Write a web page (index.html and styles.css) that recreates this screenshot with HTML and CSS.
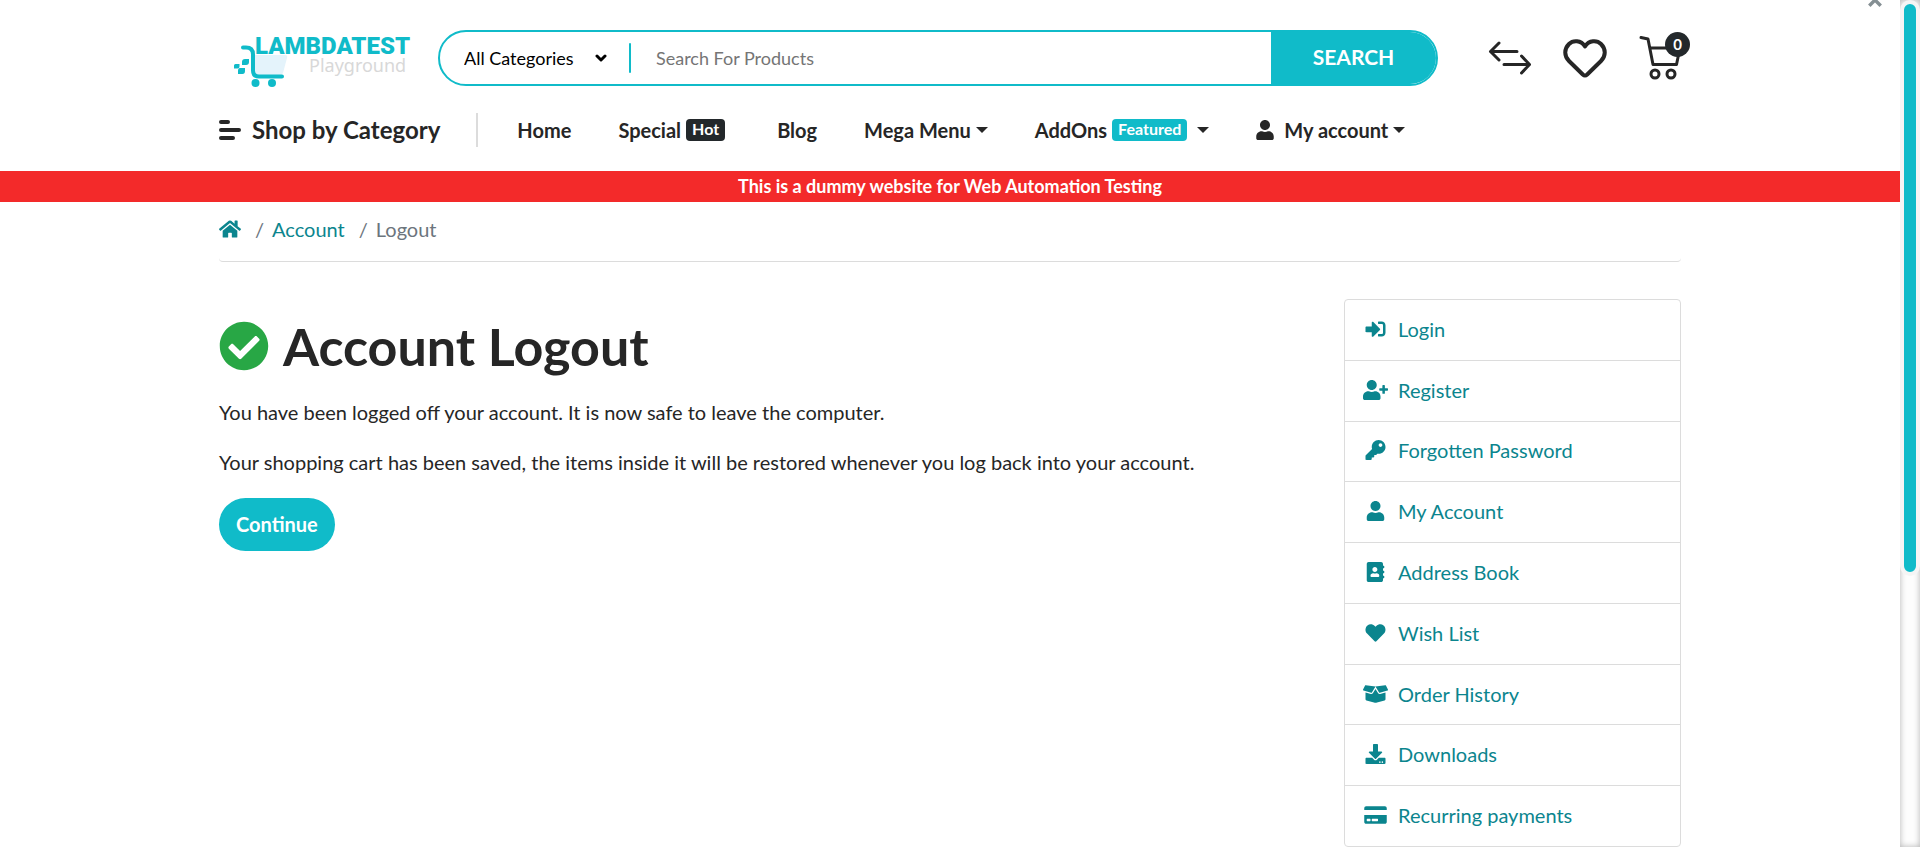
FILE: index.html
```html
<!DOCTYPE html>
<html lang="en">
<head>
<meta charset="utf-8">
<meta name="viewport" content="width=device-width, initial-scale=1">
<title>Account Logout</title>
<link rel="stylesheet" href="styles.css">
</head>
<body>
<div class="page">
  <button class="dismiss" type="button" aria-label="Close">
    <svg viewBox="0 0 14 14"><path d="M2 2l10 10M12 2L2 12"/></svg>
  </button>

  <header class="container">
    <div class="topbar">
      <a class="logo" href="#" aria-label="LambdaTest Playground">
        <svg viewBox="0 -6 180 56">
          <path class="logo-basket" d="M22 19h30q3 0 2 3l-4 15q-1 2-3 2H24q-3 0-3-3z"/>
          <path class="logo-frame" d="M10 11.500h3q7 0 7 7v16q0 6 6 6h23"/>
          <path class="logo-teal" d="M2.500 28h4v2.500q0 2-2 2H1V29.500q0-1.500 1.500-1.500zM12 23h4v3q0 3-3 3H9v-3q0-3 3-3zM7 32h5v3q0 3-2.500 3H5v-3q0-3 2-3z"/>
          <circle class="logo-teal" cx="22.500" cy="47" r="4"/>
          <circle class="logo-teal" cx="39" cy="47" r="4"/>
          <text class="logo-name" x="22" y="18">LAMBDATEST</text>
          <text class="logo-sub" x="76" y="36">Playground</text>
        </svg>
      </a>

      <form class="search">
        <label class="category">
          <span class="sr-only">Category</span>
          <select><option>All Categories</option></select>
          <svg viewBox="0 0 12 8"><path d="M2 2l4 4 4-4"/></svg>
        </label>
        <input class="query" type="text" placeholder="Search For Products" aria-label="Search For Products">
        <button class="search-button" type="submit">SEARCH</button>
      </form>

      <div class="actions">
        <a href="#" aria-label="Compare">
          <svg class="stroke-icon" width="44" height="44" viewBox="0 2 44 44"><path d="M29 17.500H2.500M11 9l-8.500 8.500L11 26M16 30.500h25.500M33.500 22l8 8.500-8 8.500"/></svg>
        </a>
        <a href="#" aria-label="Wish list">
          <svg class="stroke-icon heart" width="44" height="44" viewBox="0 2 44 44"><path d="M22 12.500C18 6 10 6 6 10C1 15 1 22 6 27L19.800 40.500Q22 42.500 24.200 40.500L38 27C43 22 43 15 38 10C34 6 26 6 22 12.500Z"/></svg>
        </a>
        <a class="cart" href="#" aria-label="Cart, 0 items">
          <svg class="stroke-icon" width="44" height="50" viewBox="0 2 44 50"><path d="M3 6.500l7 1.500L15 33.500h23.500L42 17H12"/><circle cx="17" cy="43" r="4"/><circle cx="33" cy="43" r="4"/></svg>
          <span class="cart-count">0</span>
        </a>
      </div>
    </div>

    <nav class="mainnav">
      <a class="shop" href="#">
        <svg width="22" height="20" viewBox="0 0 22 20"><path d="M2 2h7M2 10h18M2 18h12"/></svg>
        Shop by Category
      </a>
      <a href="#">Home</a>
      <a class="special" href="#">Special <span class="badge badge-dark">Hot</span></a>
      <a href="#">Blog</a>
      <a href="#">Mega Menu <span class="caret"></span></a>
      <a href="#">AddOns <span class="badge badge-teal">Featured</span> <span class="caret caret-spaced"></span></a>
      <a href="#">
        <svg class="user" width="18" height="20" viewBox="0 0 448 512"><path d="M224 256c70.700 0 128-57.300 128-128S294.700 0 224 0 96 57.300 96 128s57.300 128 128 128zm89.600 32h-16.700c-22.200 10.200-46.900 16-72.900 16s-50.600-5.800-72.900-16h-16.700C60.200 288 0 348.200 0 422.400V464c0 26.500 21.500 48 48 48h352c26.500 0 48-21.500 48-48v-41.600c0-74.200-60.200-134.400-134.400-134.400z"/></svg>
        My account <span class="caret"></span>
      </a>
    </nav>
  </header>

  <div class="notice">This is a dummy website for Web Automation Testing</div>

  <div class="container">
    <nav aria-label="Breadcrumb">
      <ol class="breadcrumb">
        <li><a href="#" aria-label="Home"><svg width="22" height="20" viewBox="0 0 576 512"><path d="M280.370 148.260L96 300.110V464a16 16 0 0 0 16 16l112.060-.29a16 16 0 0 0 15.920-16V368a16 16 0 0 1 16-16h64a16 16 0 0 1 16 16v95.640a16 16 0 0 0 16 16.050L464 480a16 16 0 0 0 16-16V300L295.670 148.260a12.190 12.190 0 0 0-15.300 0zM571.600 251.470L488 182.560V44.050a12 12 0 0 0-12-12h-56a12 12 0 0 0-12 12v72.610L318.470 43a48 48 0 0 0-61 0L4.340 251.470a12 12 0 0 0-1.600 16.900l25.500 31A12 12 0 0 0 45.150 301l235.220-193.740a12.190 12.190 0 0 1 15.300 0L530.900 301a12 12 0 0 0 16.900-1.600l25.500-31a12 12 0 0 0-1.700-16.930z"/></svg></a></li>
        <li><a href="#">Account</a></li>
        <li aria-current="page">Logout</li>
      </ol>
    </nav>

    <div class="columns">
      <main class="content">
        <h1><svg width="50" height="50" viewBox="0 0 512 512"><path d="M504 256c0 136.967-111.033 248-248 248S8 392.967 8 256 119.033 8 256 8s248 111.033 248 248zM227.314 387.314l184-184c6.248-6.248 6.248-16.379 0-22.627l-22.627-22.627c-6.248-6.249-16.379-6.249-22.628 0L216 308.118l-70.059-70.059c-6.248-6.248-16.379-6.248-22.628 0l-22.627 22.627c-6.248 6.248-6.248 16.379 0 22.627l104 104c6.249 6.249 16.379 6.249 22.628.001z"/></svg>Account Logout</h1>
        <p>You have been logged off your account. It is now safe to leave the computer.</p>
        <p>Your shopping cart has been saved, the items inside it will be restored whenever you log back into your account.</p>
        <a class="continue" href="#">Continue</a>
      </main>

      <aside class="account-menu">
        <a href="#"><svg viewBox="0 0 512 512"><path d="M416 448h-84c-6.600 0-12-5.400-12-12v-40c0-6.600 5.400-12 12-12h84c17.700 0 32-14.300 32-32V160c0-17.700-14.300-32-32-32h-84c-6.600 0-12-5.400-12-12V76c0-6.600 5.400-12 12-12h84c53 0 96 43 96 96v192c0 53-43 96-96 96zm-47-201L201 79c-15-15-41-4.500-41 17v96H24c-13.300 0-24 10.700-24 24v96c0 13.300 10.700 24 24 24h136v96c0 21.500 26 32 41 17l168-168c9.300-9.400 9.300-24.600 0-34z"/></svg>Login</a>
        <a href="#"><svg viewBox="0 0 640 512"><path d="M624 208h-64v-64c0-8.800-7.200-16-16-16h-32c-8.800 0-16 7.200-16 16v64h-64c-8.800 0-16 7.200-16 16v32c0 8.800 7.200 16 16 16h64v64c0 8.800 7.200 16 16 16h32c8.800 0 16-7.200 16-16v-64h64c8.800 0 16-7.200 16-16v-32c0-8.800-7.200-16-16-16zm-400 48c70.700 0 128-57.300 128-128S294.700 0 224 0 96 57.300 96 128s57.300 128 128 128zm89.600 32h-16.700c-22.200 10.200-46.900 16-72.900 16s-50.600-5.800-72.900-16h-16.700C60.200 288 0 348.200 0 422.400V464c0 26.500 21.500 48 48 48h352c26.500 0 48-21.500 48-48v-41.600c0-74.200-60.200-134.400-134.400-134.400z"/></svg>Register</a>
        <a href="#"><svg viewBox="0 0 512 512"><path d="M512 176.001C512 273.203 433.202 352 336 352c-11.220 0-22.190-1.062-32.827-3.069l-24.012 27.014A23.999 23.999 0 0 1 261.223 384H224v40c0 13.255-10.745 24-24 24h-40v40c0 13.255-10.745 24-24 24H24c-13.255 0-24-10.745-24-24v-78.059c0-6.365 2.529-12.470 7.029-16.971l161.802-161.802C163.108 213.814 160 195.271 160 176 160 78.798 238.797.001 335.999 0 433.488-.001 512 78.511 512 176.001zM336 128c0 26.510 21.490 48 48 48s48-21.490 48-48-21.490-48-48-48-48 21.490-48 48z"/></svg>Forgotten Password</a>
        <a href="#"><svg viewBox="0 0 448 512"><path d="M224 256c70.700 0 128-57.300 128-128S294.700 0 224 0 96 57.300 96 128s57.300 128 128 128zm89.600 32h-16.700c-22.200 10.200-46.900 16-72.900 16s-50.600-5.800-72.900-16h-16.700C60.200 288 0 348.200 0 422.400V464c0 26.500 21.500 48 48 48h352c26.500 0 48-21.500 48-48v-41.600c0-74.200-60.200-134.400-134.400-134.400z"/></svg>My Account</a>
        <a href="#"><svg viewBox="0 0 448 512"><path d="M436 160c6.600 0 12-5.400 12-12v-40c0-6.600-5.400-12-12-12h-20V48c0-26.500-21.500-48-48-48H48C21.500 0 0 21.500 0 48v416c0 26.500 21.500 48 48 48h320c26.500 0 48-21.500 48-48v-48h20c6.600 0 12-5.400 12-12v-40c0-6.600-5.400-12-12-12h-20v-64h20c6.600 0 12-5.400 12-12v-40c0-6.600-5.400-12-12-12h-20v-64h20zm-228-32c35.300 0 64 28.700 64 64s-28.700 64-64 64-64-28.700-64-64 28.700-64 64-64zm112 236.800c0 10.600-10 19.200-22.400 19.200H118.400C106 384 96 375.400 96 364.800v-19.200c0-31.800 30.100-57.600 67.200-57.600h5c12.300 5.100 25.700 8 39.800 8s27.600-2.900 39.800-8h5c37.100 0 67.200 25.800 67.200 57.600v19.200z"/></svg>Address Book</a>
        <a href="#"><svg viewBox="0 0 512 512"><path d="M462.300 62.600C407.500 15.900 326 24.300 275.700 76.200L256 96.500l-19.700-20.300C186.100 24.300 104.500 15.900 49.700 62.600c-62.800 53.600-66.100 149.800-9.900 207.900l193.500 199.800c12.500 12.900 32.800 12.900 45.300 0l193.500-199.800c56.300-58.100 53-154.300-9.800-207.900z"/></svg>Wish List</a>
        <a href="#"><svg viewBox="0 0 640 512"><path d="M425.700 256c-16.900 0-32.800-9-41.400-23.400L320 126l-64.200 106.600c-8.700 14.500-24.600 23.500-41.500 23.500-4.500 0-9-.6-13.300-1.900L64 215v178c0 14.700 10 27.500 24.200 31l216.200 54.100c10.200 2.500 20.900 2.500 31 0L551.800 424c14.200-3.600 24.200-16.400 24.200-31V215l-137 39.100c-4.300 1.300-8.800 1.900-13.300 1.900zm212.600-112.200L586.800 41c-3.100-6.200-9.800-9.800-16.700-8.900L320 64l91.700 152.100c3.800 6.300 11.400 9.300 18.500 7.300l197.900-56.500c9.900-2.900 14.700-13.900 10.200-23.100zM53.200 41L1.700 143.800c-4.600 9.200.3 20.200 10.100 23l197.900 56.500c7.100 2 14.700-1 18.500-7.300L320 64 69.800 32.100c-6.900-.8-13.500 2.700-16.600 8.900z"/></svg>Order History</a>
        <a href="#"><svg viewBox="0 0 512 512"><path d="M216 0h80c13.300 0 24 10.700 24 24v168h87.700c17.800 0 26.700 21.500 14.100 34.100L269.700 378.300c-7.500 7.500-19.800 7.500-27.300 0L90.100 226.100c-12.600-12.600-3.700-34.100 14.100-34.100H192V24c0-13.300 10.700-24 24-24zm296 376v112c0 13.300-10.700 24-24 24H24c-13.300 0-24-10.700-24-24V376c0-13.300 10.700-24 24-24h146.700l49 49c20.100 20.100 52.500 20.100 72.600 0l49-49H488c13.300 0 24 10.700 24 24zm-124 88c0-11-9-20-20-20s-20 9-20 20 9 20 20 20 20-9 20-20zm64 0c0-11-9-20-20-20s-20 9-20 20 9 20 20 20 20-9 20-20z"/></svg>Downloads</a>
        <a href="#"><svg viewBox="0 0 576 512"><path d="M0 432c0 26.500 21.500 48 48 48h480c26.500 0 48-21.500 48-48V256H0v176zm192-68c0-6.600 5.400-12 12-12h136c6.600 0 12 5.400 12 12v40c0 6.600-5.400 12-12 12H204c-6.600 0-12-5.400-12-12v-40zm-128 0c0-6.600 5.400-12 12-12h72c6.600 0 12 5.400 12 12v40c0 6.600-5.400 12-12 12H76c-6.600 0-12-5.400-12-12v-40zM576 80v48H0V80c0-26.500 21.500-48 48-48h480c26.500 0 48 21.500 48 48z"/></svg>Recurring payments</a>
      </aside>
    </div>
  </div>
</div>
<div class="scroll-track" aria-hidden="true"><div class="scroll-thumb"></div></div>
</body>
</html>
```
FILE: styles.css
```css
:root {
  --teal: #10bbc9;
  --link: #0b858e;
  --ink: #262626;
  --line: #dcdcdc;
}

* { box-sizing: border-box; }

body {
  margin: 0;
  display: flex;
  height: 100vh;
  overflow: hidden;
  background: #fff;
  color: var(--ink);
  font: 20px/28px Lato, "Open Sans", sans-serif;
}

a { color: var(--link); text-decoration: none; }

svg { display: block; flex: none; fill: currentColor; }

button, input, select { font: inherit; border: 0; margin: 0; padding: 0; }

.sr-only {
  position: absolute;
  width: 1px;
  height: 1px;
  overflow: hidden;
  clip-path: inset(50%);
}

.page { position: relative; flex: 1; min-width: 0; }

.container { max-width: 1462px; margin: 0 auto; }

.dismiss {
  position: absolute;
  top: -8px;
  right: 17px;
  background: none;
  color: #858f93;
}
.dismiss svg { width: 16px; height: 16px; stroke: currentColor; stroke-width: 3; }

/* Top bar */
.topbar { display: flex; align-items: center; padding-top: 30px; }

.logo { flex: none; width: 219px; padding-left: 14px; }
.logo svg { width: 180px; height: 56px; overflow: visible; }
.logo-basket { fill: #e4f3fb; }
.logo-frame { fill: none; stroke: var(--teal); stroke-width: 4; stroke-linecap: round; stroke-linejoin: round; }
.logo-teal { fill: var(--teal); }
.logo-name { fill: var(--teal); font: 900 24px Roboto, sans-serif; }
.logo-sub { fill: #d8d8d8; font: 400 18px "Noto Sans", sans-serif; }

.search {
  display: flex;
  flex: 1;
  max-width: 1000px;
  height: 56px;
  overflow: hidden;
  border: 2px solid var(--teal);
  border-radius: 28px;
  font-size: 18px;
}
.category {
  display: flex;
  align-items: center;
  width: 191px;
  padding: 0 24px;
  position: relative;
}
.category::after {
  content: "";
  position: absolute;
  right: 0;
  top: 11px;
  bottom: 11px;
  width: 2px;
  border-radius: 1px;
  background: var(--teal);
}
.category select { flex: 1; appearance: none; background: none; color: #000; }
.category svg {
  width: 12px;
  height: 8px;
  fill: none;
  stroke: #000;
  stroke-width: 3;
  stroke-linecap: round;
  stroke-linejoin: round;
}
.query { flex: 1; min-width: 0; padding: 0 25px; outline: 0; color: var(--ink); }
.query::placeholder { color: #757575; }
.search-button {
  width: 165px;
  padding-bottom: 2px;
  background: var(--teal);
  color: #fff;
  font-size: 21px;
  font-weight: 700;
}

.actions { display: flex; align-items: center; gap: 31px; margin: 0 -4px 0 50px; }
.actions a { color: var(--ink); }
.stroke-icon { fill: none; stroke: currentColor; stroke-width: 3; stroke-linecap: round; stroke-linejoin: round; }
.heart { stroke-width: 4; }
.cart { position: relative; }
.cart-count {
  position: absolute;
  top: -1px;
  right: -8px;
  width: 25px;
  height: 25px;
  border-radius: 50%;
  background: #23282b;
  color: #fff;
  font-size: 15px;
  font-weight: 700;
  line-height: 24px;
  text-align: center;
}

/* Main navigation */
.mainnav { display: flex; align-items: center; gap: 47px; padding: 27px 0 24px; }
.mainnav a {
  display: flex;
  align-items: center;
  gap: 5px;
  color: var(--ink);
  font-weight: 700;
  white-space: nowrap;
}
.mainnav .shop {
  gap: 11px;
  height: 34px;
  margin-right: -8px;
  padding-right: 36px;
  border-right: 2px solid var(--line);
  font-size: 24px;
}
.shop svg { stroke: currentColor; stroke-width: 4; stroke-linecap: round; }
.mainnav .special { margin-right: 5px; }
.mainnav .user { margin-right: 5px; }
.badge {
  height: 22px;
  padding: 0 6px;
  border-radius: 4px;
  color: #fff;
  font-size: 16px;
  line-height: 20px;
}
.badge-dark { background: #23282b; }
.badge-teal { background: var(--teal); }
.caret { border: 6px solid transparent; border-top-color: currentColor; border-bottom: 0; }
.caret-spaced { margin-left: 5px; }

.notice {
  background: #f32a2a;
  color: #fff;
  font-size: 18px;
  font-weight: 700;
  line-height: 31px;
  text-align: center;
}

/* Content */
.breadcrumb {
  display: flex;
  align-items: center;
  margin: 0;
  padding: 13px 0 18px;
  border-bottom: 1px solid var(--line);
  border-radius: 4px;
  list-style: none;
  color: #6c757d;
}
.breadcrumb li + li::before { content: "/"; padding: 0 8px 0 14px; }

.columns { display: flex; align-items: flex-start; gap: 30px; padding-top: 37px; }
.content { flex: 1; min-width: 0; }

h1 {
  display: flex;
  align-items: center;
  gap: 14px;
  margin: 17px 0 22px;
  font-size: 52px;
  font-weight: 700;
  line-height: 60px;
}
h1 svg { color: #28a745; }

p { margin: 0 0 22px; }

.continue {
  display: inline-block;
  padding: 12px 17px 13px;
  border-radius: 27px;
  background: var(--teal);
  color: #fff;
  font-weight: 700;
}

.account-menu {
  display: flex;
  flex-direction: column;
  width: 337px;
  min-height: 548px;
  border: 1px solid var(--line);
  border-radius: 4px;
}
.account-menu a {
  display: flex;
  flex: 1;
  align-items: center;
  gap: 10px;
  padding: 0 18px 2px;
}
.account-menu a + a { border-top: 1px solid var(--line); }
.account-menu svg { width: 25px; height: 20px; }

/* Scroll rail */
.scroll-track {
  flex: none;
  width: 20px;
  background: #fdfdfd;
  box-shadow: inset 0 0 6px rgba(0, 0, 0, .3);
}
.scroll-thumb {
  height: 68%;
  border: 4px solid #f5f5f5;
  border-radius: 10px;
  background: var(--teal);
}
```
